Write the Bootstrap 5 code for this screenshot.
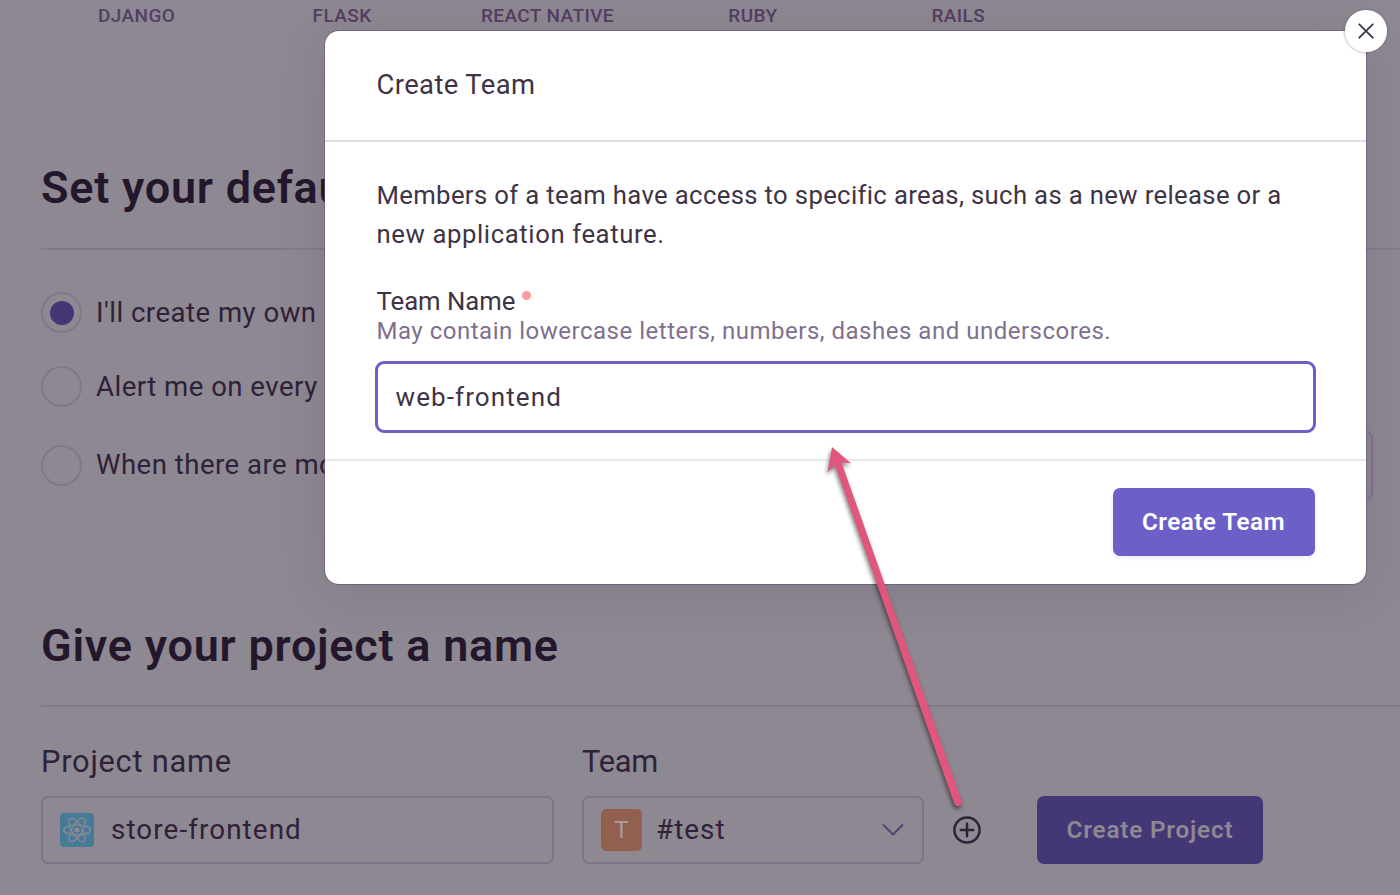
<!DOCTYPE html>
<html lang="en">
<head>
<meta charset="utf-8">
<meta name="viewport" content="width=device-width, initial-scale=1">
<title>Create Team</title>
<link href="https://cdn.jsdelivr.net/npm/bootstrap@5.3.0/dist/css/bootstrap.min.css" rel="stylesheet">
<style>
  body { font-family: Roboto, "Noto Sans", sans-serif; background: #8e8892; color: #2f2138; height: 895px; }
  .setup-page { height: 895px; padding-left: 41px; }
  .platform-row { margin-left: -7px; height: 31px; }
  .platform-name { width: 205.4px; line-height: 32px; font-size: 19px; font-weight: 500; color: #533f62; letter-spacing: .4px; }
  .section-title { font-size: 45px; line-height: 56px; font-weight: 600; color: #24172c; letter-spacing: .75px; margin: 0; height: 89px; border-bottom: 2px solid #827a88; white-space: nowrap; }
  .section-title.title-first { margin-top: 129px; height: 90px; }
  .alert-options { height: 368px; padding-top: 42px; font-size: 27.6px; letter-spacing: .47px; }
  .option-line { height: 41px; gap: 14px; }
  .option-every { margin: 33px 0 37.5px; }
  .radio-ring { width: 41px; height: 41px; border: 2px solid #827889; border-radius: 50%; }
  .radio-dot { width: 24px; height: 24px; border-radius: 50%; background: #443776; }
  .threshold-box { width: 60px; height: 69px; margin-right: 27px; border: 2px solid #807787; border-radius: 7px; }
  .project-row { padding-top: 35px; }
  .team-column { margin-left: 28px; }
  .field-label { font-size: 30.8px; line-height: 40px; margin-bottom: 14px; letter-spacing: .75px; }
  .field-label.team-label { letter-spacing: -.2px; }
  .field-box { height: 68px; border: 2px solid #7e7488; border-radius: 7px; font-size: 27.8px; }
  .name-field { width: 513px; padding-left: 17px; letter-spacing: 1.1px; gap: 17px; }
  .team-field { width: 342px; padding: 0 18px 0 17px; letter-spacing: 1.05px; }
  .team-avatar { width: 41px; height: 41.5px; border-radius: 5px; background: #91604f; color: #a99ba3; font-size: 24px; letter-spacing: 0; margin-right: 14px; }
  .add-team { margin: 0 56px 20px 29px; }
  .purple-btn { height: 68px; border: 0; border-radius: 7px; font-size: 24.3px; font-weight: 600; line-height: 1; padding: 0; }
  .project-btn { width: 226px; background: #443776; color: #8e8892; letter-spacing: .8px; }
  .team-btn { width: 202px; background: #6c5fc7; color: #fff; letter-spacing: .45px; box-shadow: 0 2px 4px rgba(43,29,56,.08); }
  .purple-btn:hover { background: #6c5fc7; color: #fff; }

  .team-modal { position: absolute; inset: 0; height: 895px; overflow: hidden; }
  .team-modal .modal-dialog { width: 1041px; max-width: none; margin: 31px 0 0 325px; }
  .team-modal .modal-content { height: 552.5px; border: 0; border-radius: 14px; color: #3e3446; box-shadow: 0 0 0 1px rgba(105,82,120,.6), 0 7px 50px rgba(43,34,51,.13); }
  .team-modal .modal-header { height: 111px; padding: 1px 51.5px 0; border-bottom: 2px solid #e0dce5; }
  .team-modal .modal-title { font-size: 27.4px; font-weight: 400; letter-spacing: .4px; line-height: 1; }
  .team-modal .modal-body { padding: 33.5px 51.5px 0; font-size: 25.7px; }
  .intro-text { line-height: 39.4px; margin-bottom: 32px; letter-spacing: .345px; }
  .intro-end { letter-spacing: .6px; }
  .name-label { line-height: 30px; letter-spacing: -.02px; }
  .required-dot { width: 9px; height: 9px; border-radius: 50%; background: #fc9c9c; margin: 4.5px 0 0 7px; }
  .help-text { font-size: 24px; line-height: 30px; color: #80708f; letter-spacing: .51px; margin-bottom: 15px; white-space: nowrap; }
  .team-input { width: 941px; height: 72px; margin-left: -1.5px; border: 3.4px solid #6c5fc7; border-radius: 9px; padding: 0 17.5px; font-size: 26px; color: #3e3446; letter-spacing: 1.1px; }
  .team-input:focus { border-color: #6c5fc7; box-shadow: none; color: #3e3446; }
  .team-modal .modal-footer { height: 124.5px; padding: 0 51.5px 0; border-top: 2px solid #ebe7f0; }
  .modal-footer > .team-btn { margin: 0; }
  .close-circle { position: absolute; top: -21px; right: -20.5px; width: 41.5px; height: 41.5px; border-radius: 50%; background: #fff; border: 0; padding: 0; z-index: 2; box-shadow: 0 0 0 1.7px rgba(105,82,120,.22); }
  .pointer-arrow { position: absolute; left: 815px; top: 435px; z-index: 1100; filter: drop-shadow(-1px 3px 2px rgba(0,0,0,.5)); pointer-events: none; }
</style>
</head>
<body class="overflow-hidden position-relative">

<main class="setup-page overflow-hidden">
  <div class="platform-row d-flex text-center">
    <div class="platform-name flex-shrink-0">DJANGO</div>
    <div class="platform-name flex-shrink-0">FLASK</div>
    <div class="platform-name flex-shrink-0">REACT NATIVE</div>
    <div class="platform-name flex-shrink-0">RUBY</div>
    <div class="platform-name flex-shrink-0">RAILS</div>
  </div>

  <h2 class="section-title title-first">Set your defau</h2>
  <div class="alert-options">
    <div class="option-line d-flex align-items-center">
      <span class="radio-ring d-flex align-items-center justify-content-center"><span class="radio-dot"></span></span>
      <span>I'll create my own a</span>
    </div>
    <div class="option-line option-every d-flex align-items-center">
      <span class="radio-ring"></span>
      <span>Alert me on every</span>
    </div>
    <div class="option-line d-flex align-items-center">
      <span class="radio-ring"></span>
      <span>When there are mo</span>
      <span class="threshold-box ms-auto"></span>
    </div>
  </div>

  <h2 class="section-title">Give your project a name</h2>
  <div class="project-row d-flex align-items-end">
    <div>
      <div class="field-label">Project name</div>
      <div class="field-box name-field d-flex align-items-center">
        <svg width="34" height="34" viewBox="0 0 34 34" fill="none" stroke="#8e8892" stroke-width="1.3">
          <rect width="34" height="34" rx="4" fill="#467b98" stroke="none"/>
          <ellipse cx="17" cy="17" rx="13.4" ry="5.1"/>
          <ellipse cx="17" cy="17" rx="13.4" ry="5.1" transform="rotate(60 17 17)"/>
          <ellipse cx="17" cy="17" rx="13.4" ry="5.1" transform="rotate(120 17 17)"/>
          <circle cx="17" cy="17" r="2.5" fill="#8e8892" stroke="none"/>
        </svg>
        <span>store-frontend</span>
      </div>
    </div>
    <div class="team-column">
      <div class="field-label team-label">Team</div>
      <div class="field-box team-field d-flex align-items-center">
        <span class="team-avatar d-flex align-items-center justify-content-center">T</span>
        <span>#test</span>
        <svg class="ms-auto" width="22" height="14" viewBox="0 0 22 14" fill="none" stroke="#54426a" stroke-width="2" stroke-linecap="round" stroke-linejoin="round"><path d="M1.5 2 11 11.5 20.5 2"/></svg>
      </div>
    </div>
    <svg class="add-team" width="28" height="28" viewBox="0 0 28 28" fill="none" stroke="#2f2138" stroke-width="2.5" stroke-linecap="round"><circle cx="14" cy="14" r="12.6"/><path d="M14 7.8v12.4M7.8 14h12.4"/></svg>
    <button class="btn purple-btn project-btn" type="button">Create Project</button>
  </div>
</main>

<div class="modal team-modal d-block" role="dialog" aria-label="Create Team">
  <div class="modal-dialog">
    <div class="modal-content">
      <button class="close-circle d-flex align-items-center justify-content-center" type="button" aria-label="Close">
        <svg width="16" height="16" viewBox="0 0 16 16" fill="none" stroke="#3e3446" stroke-width="1.8" stroke-linecap="round"><path d="M1.3 1.3 14.7 14.7M14.7 1.3 1.3 14.7"/></svg>
      </button>
      <div class="modal-header"><h4 class="modal-title">Create Team</h4></div>
      <div class="modal-body">
        <p class="intro-text">Members of a team have access to specific areas, such as a new release or a<br><span class="intro-end">new application feature.</span></p>
        <div class="name-label d-flex"><span>Team Name</span><span class="required-dot"></span></div>
        <div class="help-text">May contain lowercase letters, numbers, dashes and underscores.</div>
        <input class="form-control team-input" type="text" value="web-frontend" aria-label="Team Name">
      </div>
      <div class="modal-footer justify-content-end">
        <button class="btn purple-btn team-btn" type="button">Create Team</button>
      </div>
    </div>
  </div>
</div>

<svg class="pointer-arrow" width="160" height="385" viewBox="815 435 160 385" fill="#e1567c">
  <path d="M832 447 851 463.3 841.5 462.4 961.6 800.5A4 4 0 0 1 954.1 803.3L835 465 827.6 472Z"/>
</svg>

<script src="https://cdn.jsdelivr.net/npm/bootstrap@5.3.0/dist/js/bootstrap.bundle.min.js"></script>
</body>
</html>
